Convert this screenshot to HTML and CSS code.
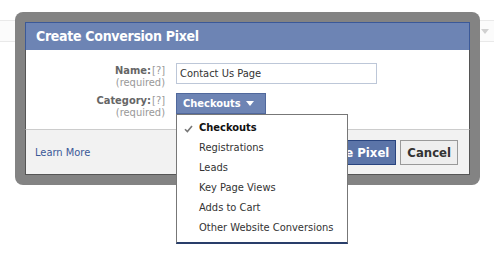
FILE: index.html
```html
<!DOCTYPE html>
<html lang="en">
<head>
    <meta charset="UTF-8">
    <meta name="viewport" content="width=device-width, initial-scale=1.0">
    <title>Create Conversion Pixel</title>
    <link rel="stylesheet" href="styles.css">
</head>
<body>
    <div class="page">
        <div class="toolbar">
            <span class="tool-menu">Action <span class="tool-arrow"></span></span>
        </div>
    </div>

    <div class="dialog-frame">
        <div class="dialog">
            <div class="dialog-header">
                <h2>Create Conversion Pixel</h2>
            </div>

            <div class="dialog-body">
                <div class="form-label">
                    <div><b>Name:</b><span class="help">[?]</span></div>
                    <div class="required">(required)</div>
                </div>
                <div class="form-field">
                    <input type="text" class="text-input" value="Contact Us Page">
                </div>

                <div class="form-label">
                    <div><b>Category:</b><span class="help">[?]</span></div>
                    <div class="required">(required)</div>
                </div>
                <div class="form-field">
                    <div class="select-wrap">
                        <button class="select-button">Checkouts <span class="caret"></span></button>
                        <ul class="select-menu">
                            <li class="selected">
                                <svg class="check" width="9" height="8" viewBox="0 0 9 8">
                                    <path d="M1 4.2 L3.4 6.6 L8 1" fill="none" stroke="#777" stroke-width="1.6"/>
                                </svg>
                                Checkouts
                            </li>
                            <li>Registrations</li>
                            <li>Leads</li>
                            <li>Key Page Views</li>
                            <li>Adds to Cart</li>
                            <li>Other Website Conversions</li>
                        </ul>
                    </div>
                </div>
            </div>

            <div class="dialog-footer">
                <a href="#" class="learn-more">Learn More</a>
                <div class="buttons">
                    <button class="btn btn-primary">Create Pixel</button>
                    <button class="btn">Cancel</button>
                </div>
            </div>
        </div>
    </div>
</body>
</html>
```

FILE: styles.css
```css
* {
    margin: 0;
    padding: 0;
    box-sizing: border-box;
}

body {
    background-color: #fff;
    font-family: 'DejaVu Sans Condensed', 'DejaVu Sans', sans-serif;
    font-size: 11px;
    color: #333;
}

/* page behind the dialog */
.page {
    padding-top: 20px;
}

.toolbar {
    height: 22px;
    border-top: 1px solid #e9e9e9;
    border-bottom: 1px solid #e9e9e9;
    background-color: #fbfbfb;
    display: flex;
    justify-content: flex-end;
    align-items: center;
    padding-right: 5px;
}

.tool-menu {
    color: #d6d6d6;
    font-weight: bold;
    display: flex;
    align-items: center;
    gap: 4px;
}

.tool-arrow {
    border-left: 4px solid transparent;
    border-right: 4px solid transparent;
    border-top: 5px solid #d0d0d0;
}

/* dialog */
.dialog-frame {
    position: absolute;
    left: 15px;
    top: 12px;
    width: 465px;
    padding: 10px;
    background-color: #838383;
    border-radius: 8px;
}

.dialog {
    background-color: #fff;
}

.dialog-header {
    height: 28px;
    background-color: #6d84b4;
    border: 1px solid #3b5998;
    border-bottom: none;
}

.dialog-header h2 {
    color: #fff;
    font-size: 14px;
    font-weight: bold;
    letter-spacing: -0.3px;
    line-height: 27px;
    padding-left: 10px;
}

.dialog-body {
    border-left: 1px solid #555;
    border-right: 1px solid #555;
    padding: 13px 0 10px;
    display: grid;
    grid-template-columns: 139px 1fr;
    column-gap: 11px;
    row-gap: 4px;
}

.form-label {
    text-align: right;
    color: #666;
    line-height: 12px;
    padding-top: 2px;
}

.form-label b {
    color: #666;
}

.help {
    color: #999;
    padding-left: 1px;
}

.required {
    color: #999;
}

.text-input {
    width: 201px;
    height: 21px;
    border: 1px solid #bdc7d8;
    padding: 0 3px;
    font-family: inherit;
    font-size: 11px;
    color: #333;
    outline: none;
}

.select-wrap {
    position: relative;
    display: inline-block;
}

.select-button {
    width: 90px;
    height: 21px;
    background-color: #6d84b4;
    border: 1px solid #50689c;
    color: #fff;
    font-family: inherit;
    font-size: 11px;
    font-weight: bold;
    display: flex;
    align-items: center;
    padding-left: 6px;
    gap: 5px;
}

.caret {
    border-left: 4px solid transparent;
    border-right: 4px solid transparent;
    border-top: 5px solid #fff;
}

.select-menu {
    position: absolute;
    left: 0;
    top: 21px;
    width: 172px;
    list-style: none;
    background-color: #fff;
    border: 1px solid #777;
    border-bottom: 2px solid #293e6a;
    padding: 3px 0 4px;
    z-index: 2;
}

.select-menu li {
    height: 20px;
    line-height: 20px;
    padding-left: 22px;
    color: #333;
    position: relative;
}

.select-menu li.selected {
    font-weight: bold;
    color: #111;
}

.check {
    position: absolute;
    left: 7px;
    top: 7px;
}

.dialog-footer {
    background-color: #f2f2f2;
    border-top: 1px solid #ccc;
    border-left: 1px solid #555;
    border-right: 1px solid #555;
    border-bottom: 1px solid #555;
    padding: 10px 11px 9px 9px;
    display: flex;
    align-items: center;
    justify-content: space-between;
}

.learn-more {
    color: #3b5998;
    text-decoration: none;
}

.buttons {
    display: flex;
    gap: 4px;
}

.btn {
    height: 25px;
    padding: 0 6px;
    border: 1px solid #999;
    background-color: #eee;
    color: #333;
    font-family: inherit;
    font-size: 13px;
    font-weight: bold;
}

.btn-primary {
    background-color: #5b74a8;
    border-color: #29447e;
    color: #fff;
}
```
